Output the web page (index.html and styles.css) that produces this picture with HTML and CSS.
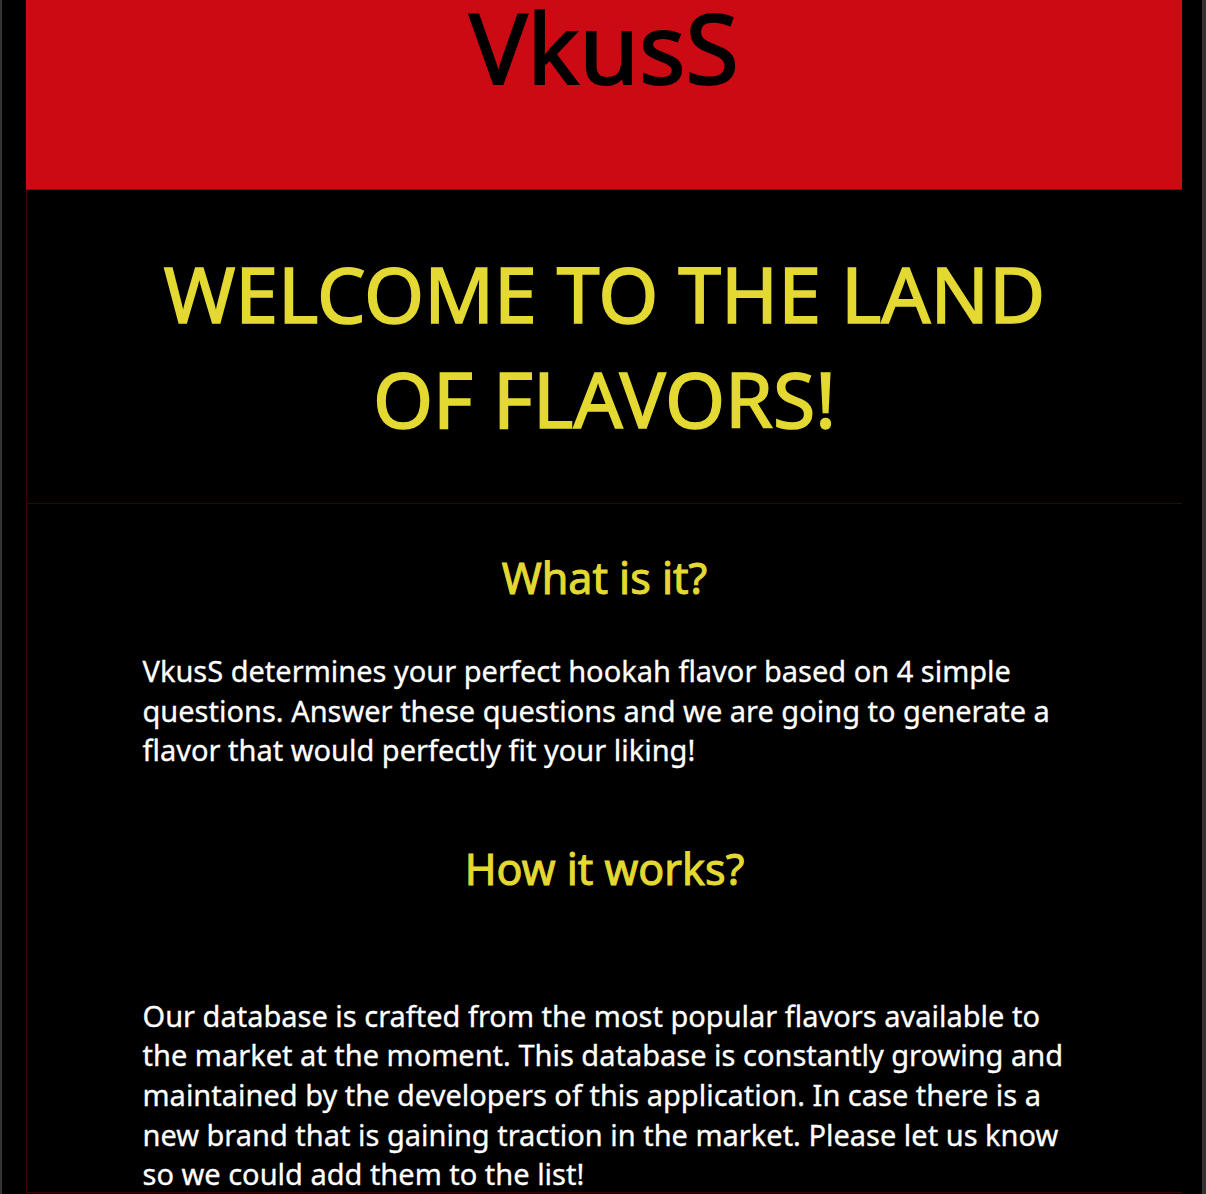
FILE: index.html
```html
<!DOCTYPE html>
<html lang="en">
<head>
<meta charset="utf-8">
<title>VkusS</title>
<link rel="stylesheet" href="styles.css">
</head>
<body>
  <div class="page">
    <header class="site-header">
      <h1 class="logo">VkusS</h1>
    </header>
    <section class="hero">
      <h2 class="hero-title">WELCOME TO THE LAND OF FLAVORS!</h2>
    </section>
    <section class="info">
      <div class="info-inner">
        <h3 class="info-title">What is it?</h3>
        <p class="info-text">VkusS determines your perfect hookah flavor based on 4 simple questions. Answer these questions and we are going to generate a flavor that would perfectly fit your liking!</p>
        <h3 class="info-title info-title--spaced">How it works?</h3>
        <p class="info-text">Our database is crafted from the most popular flavors available to the market at the moment. This database is constantly growing and maintained by the developers of this application. In case there is a new brand that is gaining traction in the market. Please let us know so we could add them to the list!</p>
      </div>
    </section>
  </div>
</body>
</html>
```

FILE: styles.css
```css
html {
  background: #000;
}

body {
  margin: 0;
  min-height: 1194px;
  box-sizing: border-box;
  background: #000;
  border-left: 2px solid #333;
  border-right: 4px solid #333;
  font-family: "Noto Sans", "Open Sans", sans-serif;
  overflow: hidden;
}

.page {
  width: 1156px;
  margin-left: 24px;
}

.site-header {
  height: 190px;
  box-sizing: border-box;
  padding-top: 3px;
  background: #cc0a14;
  border-bottom: 1px solid #8a0a10;
  display: flex;
  justify-content: center;
  align-items: flex-start;
}

.logo {
  margin: 0;
  font-size: 97px;
  line-height: 86px;
  font-weight: 400;
  color: #000;
  -webkit-text-stroke: 2px #000;
}

.hero {
  border-left: 1px solid #3a0406;
  border-bottom: 1px solid #3a0406;
  padding: 51px 0 52px;
}

.hero-title {
  width: 924px;
  margin: 0 auto;
  text-align: center;
  font-size: 77px;
  line-height: 105px;
  font-weight: 400;
  color: #e3d932;
  -webkit-text-stroke: 1.6px #e3d932;
}

.info {
  border-left: 1px solid #3a0406;
  border-bottom: 1px solid #3a0406;
  padding: 44px 0 0;
  height: 644px;
}

.info-inner {
  width: 924px;
  margin: 0 auto;
}

.info-title {
  margin: 0 0 44px;
  text-align: center;
  font-size: 43px;
  font-weight: 400;
  color: #e3d932;
  -webkit-text-stroke: 1px #e3d932;
}

.info-title--spaced {
  margin-bottom: 98px;
}

.info-text {
  margin: 0 0 69px;
  font-size: 29px;
  line-height: 39.6px;
  color: #fff;
  -webkit-text-stroke: 0.3px #fff;
}
```
